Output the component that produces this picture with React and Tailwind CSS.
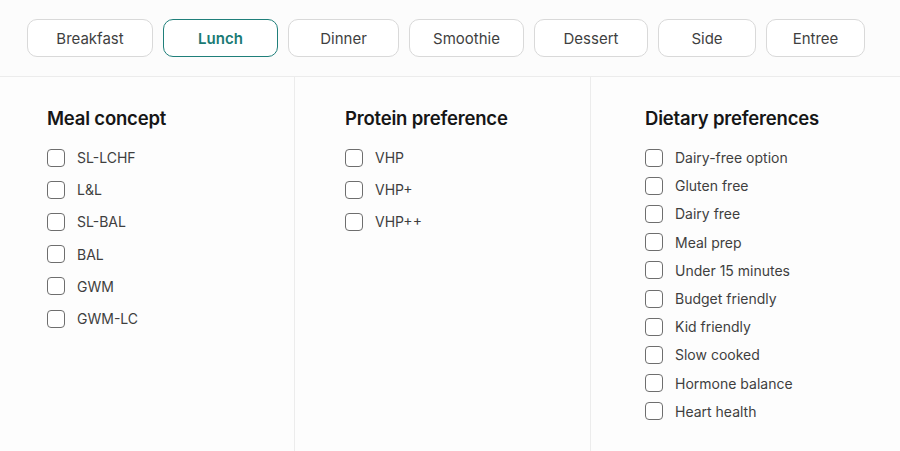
import React, { useState } from 'react';

const tabs = [
  { name: 'Breakfast', w: 'w-[126px]' },
  { name: 'Lunch', w: 'w-[115px]' },
  { name: 'Dinner', w: 'w-[111px]' },
  { name: 'Smoothie', w: 'w-[115px]' },
  { name: 'Dessert', w: 'w-[114px]' },
  { name: 'Side', w: 'w-[98px]' },
  { name: 'Entree', w: 'w-[99px]' },
];

const columns = [
  {
    title: 'Meal concept',
    box: 'w-[295px] pl-[47px] border-r',
    gap: 'gap-[15px]',
    items: ['SL-LCHF', 'L&L', 'SL-BAL', 'BAL', 'GWM', 'GWM-LC'],
  },
  {
    title: 'Protein preference',
    box: 'w-[296px] pl-[50px] border-r',
    gap: 'gap-[15px]',
    items: ['VHP', 'VHP+', 'VHP++'],
  },
  {
    title: 'Dietary preferences',
    box: 'flex-1 pl-[54px]',
    gap: 'gap-[11px]',
    items: ['Dairy-free option', 'Gluten free', 'Dairy free', 'Meal prep', 'Under 15 minutes', 'Budget friendly', 'Kid friendly', 'Slow cooked', 'Hormone balance', 'Heart health'],
  },
];

export default function App() {
  const [active, setActive] = useState('Lunch');
  const [checked, setChecked] = useState({});

  const toggle = (key) => setChecked(c => ({ ...c, [key]: !c[key] }));

  return (
    <div className="w-[900px] h-[451px] bg-[#fdfdfd] overflow-hidden font-['Inter',sans-serif]">
      <nav className="flex gap-[10px] pl-[27px] pt-[19px] h-[77px] bg-[#fcfcfc] border-b border-[#ececec]">
        {tabs.map(t => (
          <button
            key={t.name}
            onClick={() => setActive(t.name)}
            className={`${t.w} h-[38px] flex items-center justify-center pt-[1px] rounded-[10px] bg-white text-[15px] leading-none ${active === t.name ? 'border-[1.5px] border-[#1f7f7a] text-[#1a7a74] font-semibold' : 'border border-[#d9d9d9] text-[#3f3f3f]'}`}
          >
            {t.name}
          </button>
        ))}
      </nav>

      <main className="flex h-[374px]">
        {columns.map(col => (
          <section key={col.title} className={`${col.box} border-[#ececec] pt-[29px]`}>
            <h2 className="text-[18.5px] font-semibold text-[#161616] leading-[24px] tracking-[-0.2px]">{col.title}</h2>
            <div className={`flex flex-col ${col.gap} mt-[19px]`}>
              {col.items.map(item => (
                <label key={item} className="flex items-center gap-[12px] cursor-pointer h-[17.2px]">
                  <span
                    onClick={() => toggle(col.title + item)}
                    className={`w-[18px] h-[18px] rounded-[4px] border-[1.5px] border-[#6e6e6e] ${checked[col.title + item] ? 'bg-[#1f7f7a] border-[#1f7f7a]' : 'bg-white'}`}
                  />
                  <span className="text-[14px] text-[#3f3f3f]">{item}</span>
                </label>
              ))}
            </div>
          </section>
        ))}
      </main>
    </div>
  );
}
